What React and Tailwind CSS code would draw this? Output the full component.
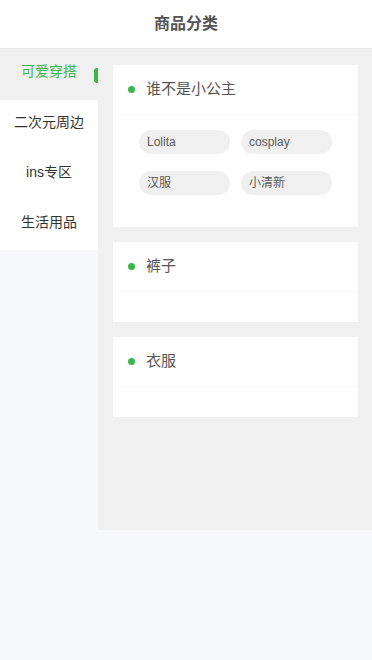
import React from "react";

const font = { fontFamily: '"Liberation Sans", "Noto Sans CJK SC", sans-serif' };

const tabs = ["可爱穿搭", "二次元周边", "ins专区", "生活用品"];

function Card({ title, tags }) {
  return (
    <div className="bg-white">
      <div className="h-[50px] border-b border-[#f8f8f8] flex items-center pl-[15px]">
        <span className="w-[7px] h-[7px] rounded-full bg-[#3cb64a]" />
        <span className="ml-[11px] text-[15px] text-[#555]">{title}</span>
      </div>
      <div className="pt-[15px] pb-[15px] pl-[26px]">
        {tags && (
          <div className="grid grid-cols-[91px_91px] gap-x-[11px]">
            {tags.map((t) => (
              <div
                key={t}
                className="h-[24px] mb-[17px] rounded-full bg-[#f0f0f0] flex items-center pl-[8px] text-[12px] text-[#5a5a5a]"
              >
                {t}
              </div>
            ))}
          </div>
        )}
      </div>
    </div>
  );
}

export default function App() {
  return (
    <div className="w-[372px] h-[660px] bg-[#f7f8fa]" style={font}>
      <header className="h-[49px] bg-white border-b border-[#ebebeb] flex items-center justify-center text-[16px] font-bold text-[#555]">
        商品分类
      </header>
      <div className="flex items-start">
        <aside className="w-[98px] bg-white">
          {tabs.map((t, i) => (
            <div
              key={t}
              className={
                i === 0
                  ? "relative h-[51px] flex items-center justify-center pb-[6px] text-[14px] bg-[#f0f0f0] text-[#3cb64a]"
                  : "h-[50px] flex items-center justify-center pb-[5px] text-[14px] text-[#333]"
              }
            >
              {t}
              {i === 0 && (
                <span className="absolute right-0 top-[19px] w-[4px] h-[15px] rounded-l-[3px] bg-[#3cb64a]" />
              )}
            </div>
          ))}
        </aside>
        <main className="flex-1 h-[481px] bg-[#f0f0f0] pt-[16px] pl-[15px] pr-[14px] flex flex-col gap-[15px]">
          <Card title="谁不是小公主" tags={["Lolita", "cosplay", "汉服", "小清新"]} />
          <Card title="裤子" />
          <Card title="衣服" />
        </main>
      </div>
    </div>
  );
}
